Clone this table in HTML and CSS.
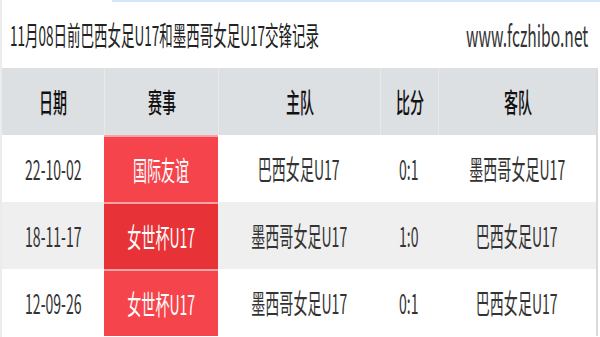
FILE: index.html
```html
<!DOCTYPE html>
<html lang="zh-CN">
<head>
<meta charset="utf-8">
<link rel="stylesheet" href="styles.css">
</head>
<body>
<div class="page">
  <div class="topline"></div>
  <div class="titlebar">
    <div class="title"><span class="sq left">11月08日前巴西女足U17和墨西哥女足U17交锋记录</span></div>
    <div class="site"><span class="sq right">www.fczhibo.net</span></div>
  </div>
  <div class="table">
    <div class="row head">
      <div class="cell"><span class="sq">日期</span></div>
      <div class="cell"><span class="sq">赛事</span></div>
      <div class="cell"><span class="sq">主队</span></div>
      <div class="cell"><span class="sq">比分</span></div>
      <div class="cell"><span class="sq">客队</span></div>
    </div>
    <div class="row">
      <div class="cell"><span class="sq">22-10-02</span></div>
      <div class="cell comp"><span class="sq">国际友谊</span></div>
      <div class="cell"><span class="sq">巴西女足U17</span></div>
      <div class="cell"><span class="sq">0:1</span></div>
      <div class="cell"><span class="sq">墨西哥女足U17</span></div>
    </div>
    <div class="row alt">
      <div class="cell"><span class="sq">18-11-17</span></div>
      <div class="cell comp"><span class="sq">女世杯U17</span></div>
      <div class="cell"><span class="sq">墨西哥女足U17</span></div>
      <div class="cell"><span class="sq">1:0</span></div>
      <div class="cell"><span class="sq">巴西女足U17</span></div>
    </div>
    <div class="row">
      <div class="cell"><span class="sq">12-09-26</span></div>
      <div class="cell comp"><span class="sq">女世杯U17</span></div>
      <div class="cell"><span class="sq">墨西哥女足U17</span></div>
      <div class="cell"><span class="sq">0:1</span></div>
      <div class="cell"><span class="sq">巴西女足U17</span></div>
    </div>
  </div>
</div>
</body>
</html>
```
FILE: styles.css
```css
html, body {
  margin: 0;
  padding: 0;
  background: #ffffff;
}
body {
  width: 600px;
  height: 337px;
  overflow: hidden;
  font-family: "Noto Sans CJK SC", "Liberation Sans", sans-serif;
}
.page {
  border-left: 2px solid #ececec;
  height: 337px;
  box-sizing: border-box;
}
.topline {
  height: 2px;
  margin-left: 110px;
  background: #d3e5f6;
}
.sq {
  display: inline-block;
  white-space: nowrap;
  transform: scaleX(0.52);
}
.sq.left { transform-origin: left center; }
.sq.right { transform-origin: right center; }
.titlebar {
  height: 66px;
  display: flex;
  align-items: center;
  padding: 0 12px 2px 8px;
  box-sizing: border-box;
  color: #222;
}
.title {
  flex: 1;
  min-width: 0;
  display: flex;
  font-size: 27px;
}
.title .sq {
  transform: scaleX(0.5);
}
.site {
  width: 130px;
  display: flex;
  justify-content: flex-end;
  font-size: 30px;
  color: #333;
}
.table {
  margin-right: 2px;
  border-right: 2px solid #dadada;
}
.row {
  display: grid;
  grid-template-columns: 102px 114px 162px 58px 1fr;
  height: 67px;
  font-size: 27px;
  color: #333;
}
.row.head {
  height: 67px;
  background: #dde0e3;
  color: #111;
  font-weight: 500;
}
.row.head .cell + .cell {
  border-left: 1px solid #e7e9eb;
}
.row.alt {
  background: #efefef;
}
.cell {
  display: flex;
  align-items: center;
  justify-content: center;
  min-width: 0;
}
.comp {
  background: #f5444b;
  color: #fff;
  border-top: 2px solid #f8a3a3;
}
.alt .comp {
  background: #e73338;
}
```
